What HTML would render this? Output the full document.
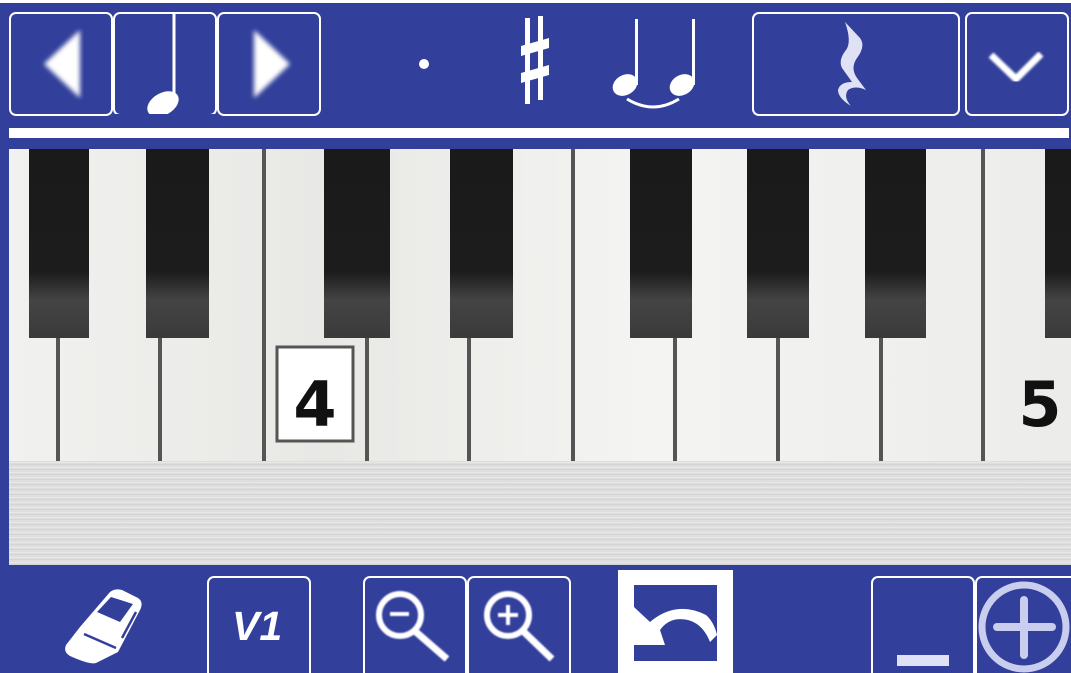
<!DOCTYPE html>
<html><head><meta charset="utf-8"><style>
html,body{margin:0;padding:0;width:1071px;height:673px;overflow:hidden;}
body{background:#323f9b;font-family:"Liberation Sans",sans-serif;}
#w{position:relative;width:1071px;height:673px;overflow:hidden;}
.b{position:absolute;box-sizing:border-box;border:2px solid #fff;border-radius:7px;}
.a{position:absolute;}
</style></head><body><div id="w">
<div class="a" style="left:0;top:0;width:1071px;height:3px;background:#fff;"></div>
<div class="b" style="left:9px;top:12px;width:104px;height:104px;"></div>
<div class="b" style="left:113px;top:12px;width:104px;height:104px;"></div>
<div class="b" style="left:217px;top:12px;width:104px;height:104px;"></div>
<div class="b" style="left:752px;top:12px;width:208px;height:104px;"></div>
<div class="b" style="left:965px;top:12px;width:104px;height:104px;"></div>
<div class="a" style="left:9px;top:128px;width:1060px;height:10px;background:#fff;"></div>

<svg class="a" style="left:0;top:0" width="1071" height="148">
<defs><filter id="bl"><feGaussianBlur stdDeviation="2.5"/></filter><filter id="bl2"><feGaussianBlur stdDeviation="1"/></filter></defs>
<polygon points="44,64 80,30 80,98" fill="#fff" filter="url(#bl)"/>
<polygon points="254,30 254,98 290,64" fill="#fff" filter="url(#bl)"/>
<line x1="174" y1="14" x2="174" y2="104" stroke="#fff" stroke-width="3"/>
<ellipse cx="163" cy="104" rx="17" ry="11" transform="rotate(-30 163 104)" fill="#fff"/>
<rect x="115" y="114" width="100" height="4" fill="#323f9b"/>
<circle cx="424" cy="64" r="5" fill="#fff"/>
<g fill="#fff"><rect x="525" y="18" width="5" height="86"/><rect x="538" y="16" width="5" height="84"/>
<polygon points="521,46 549,38 549,48 521,56"/><polygon points="521,73 549,65 549,75 521,83"/></g>
<g fill="#fff" stroke="none"><rect x="635" y="19" width="3" height="66"/><rect x="692" y="19" width="3" height="66"/>
<ellipse cx="625" cy="85" rx="13" ry="10" transform="rotate(-30 625 85)"/><ellipse cx="682" cy="85" rx="13" ry="10" transform="rotate(-30 682 85)"/></g>
<path d="M627,99 Q653,115 679,99" stroke="#fff" stroke-width="3" fill="none"/>
<path d="M845,22 L860,38 Q866,46 857,58 Q850,68 857,78 L866,90 Q855,85 848,90 Q843,97 851,106 Q838,98 838,90 Q840,82 852,82 L842,68 Q838,60 846,50 Q852,42 845,22Z" fill="#dfe2f4"/>
<polyline points="991,55 1016,79 1041,54" stroke="#fff" stroke-width="7" fill="none" filter="url(#bl2)"/>
</svg>

<div class="a" style="left:9px;top:149px;width:1062px;height:312px;background:linear-gradient(90deg,#f1f1ef,#e8e8e5 30%,#f4f4f2 60%,#ececea);"></div>
<svg class="a" style="left:0;top:149px" width="1071" height="312">
<defs><linearGradient id="bk" x1="0" y1="0" x2="0" y2="1"><stop offset="0" stop-color="#1a1a1a"/><stop offset="0.65" stop-color="#1c1c1c"/><stop offset="0.8" stop-color="#444"/><stop offset="1" stop-color="#3a3a3a"/></linearGradient></defs>
<g fill="#555"><rect x="56" y="0" width="4" height="312"/><rect x="158" y="0" width="4" height="312"/><rect x="262" y="0" width="4" height="312"/><rect x="365" y="0" width="4" height="312"/><rect x="467" y="0" width="4" height="312"/><rect x="571" y="0" width="4" height="312"/><rect x="673" y="0" width="4" height="312"/><rect x="776" y="0" width="4" height="312"/><rect x="879" y="0" width="4" height="312"/><rect x="981" y="0" width="4" height="312"/></g>
<g fill="url(#bk)">
<rect x="29" y="0" width="60" height="189"/><rect x="146" y="0" width="63" height="189"/><rect x="324" y="0" width="66" height="189"/><rect x="450" y="0" width="63" height="189"/><rect x="630" y="0" width="62" height="189"/><rect x="747" y="0" width="62" height="189"/><rect x="865" y="0" width="61" height="189"/><rect x="1045" y="0" width="30" height="189"/></g>
<rect x="277" y="198" width="76" height="94" fill="#fff" stroke="#555" stroke-width="3"/>
<text x="315" y="277" text-anchor="middle" font-family="DejaVu Sans" font-weight="bold" font-size="62" fill="#111">4</text>
<text x="1040" y="277" text-anchor="middle" font-family="DejaVu Sans" font-weight="bold" font-size="62" fill="#111">5</text>
</svg>
<div class="a" style="left:9px;top:461px;width:1062px;height:104px;background:repeating-linear-gradient(180deg,#d9d9d9 0,#ececec 2px,#cfcfcf 3px,#e4e4e4 5px);"></div>

<div class="b" style="left:207px;top:576px;width:104px;height:110px;"></div>
<div class="b" style="left:363px;top:576px;width:104px;height:110px;"></div>
<div class="b" style="left:467px;top:576px;width:104px;height:110px;"></div>
<div class="b" style="left:871px;top:576px;width:104px;height:110px;"></div>
<div class="b" style="left:975px;top:576px;width:104px;height:110px;"></div>
<div class="a" style="left:618px;top:570px;width:115px;height:103px;background:#fff;"></div>
<div class="a" style="left:634px;top:585px;width:83px;height:76px;background:#323f9b;"></div>
<div class="a" style="left:232px;top:603px;font-weight:bold;font-style:italic;font-size:41px;color:#fff;">V1</div>
<svg class="a" style="left:0;top:560px" width="1071" height="113">
<defs><filter id="b3"><feGaussianBlur stdDeviation="0.8"/></filter></defs>
<path d="M80,67 L110,32 Q115,28 122,30 L138,38 Q144,42 140,50 L118,92 L96,103 Q90,105 70,96 Q63,92 66,85Z" fill="#fff"/>
<path d="M97,52 L111,37 L133,44 L120,62Z" fill="#323f9b"/>
<path d="M84,74 L116,88" stroke="#323f9b" stroke-width="2.5"/>
<path d="M122,78 L136,52" stroke="#323f9b" stroke-width="2.5"/>
<g stroke="#fff" stroke-width="6" fill="none" filter="url(#b3)">
<circle cx="400" cy="55" r="21"/><line x1="416" y1="72" x2="447" y2="99" stroke-width="7"/>
<line x1="390" y1="54" x2="409" y2="54" stroke-width="4"/>
<circle cx="508" cy="55" r="21"/><line x1="524" y1="72" x2="552" y2="99" stroke-width="7"/>
<line x1="498" y1="55" x2="518" y2="55" stroke-width="4"/><line x1="508" y1="45" x2="508" y2="65" stroke-width="4"/>
</g>
<path d="M634,47 L650,62 Q676,40 706,55 Q714,62 717,75 L710,82 Q703,64 688,60 Q670,56 660,70 L665,85 L634,85Z" fill="#fff"/>
<rect x="897" y="95" width="52" height="11" fill="#dfe2f6"/>
<circle cx="1024" cy="67" r="42" stroke="#c9cdee" stroke-width="7" fill="none"/>
<line x1="1024" y1="40" x2="1024" y2="95" stroke="#c9cdee" stroke-width="8" stroke-linecap="round"/>
<line x1="997" y1="67" x2="1052" y2="67" stroke="#c9cdee" stroke-width="8" stroke-linecap="round"/>
</svg>
</div></body></html>
